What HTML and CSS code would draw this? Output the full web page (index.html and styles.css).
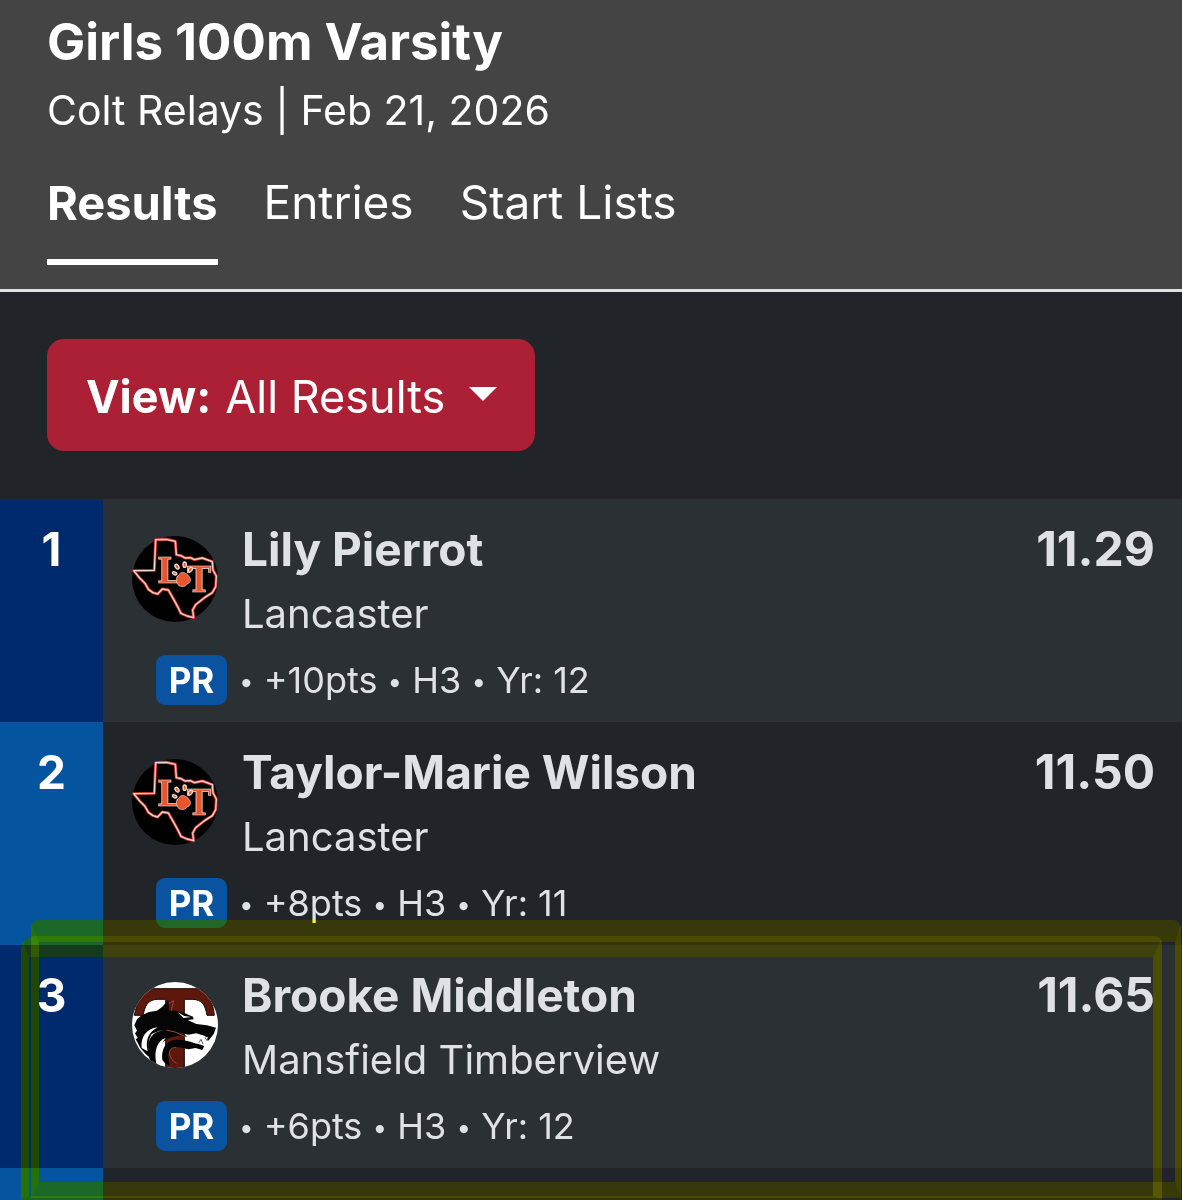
FILE: index.html
```html
<!DOCTYPE html>
<html lang="en">
<head>
<meta charset="utf-8">
<meta name="viewport" content="width=device-width, initial-scale=1">
<title>Girls 100m Varsity</title>
<link rel="stylesheet" href="styles.css">
</head>
<body>
<svg class="defs" aria-hidden="true">
  <defs>
    <g id="texas">
      <circle cx="150" cy="147" r="129" fill="#000"/>
      <path d="M92 29L124 28L151 34L154 74L168 77L180 84L196 83L208 89L232 84L262 95L264 120L274 138L272 170L262 188L240 202L212 224L203 240L206 263L186 258L168 250L158 230L146 208L130 180L112 177L98 192L84 188L70 178L60 160L44 144L26 122L88 121Z" fill="none" stroke="#c9382b" stroke-width="9" stroke-linejoin="round"/>
      <path d="M92 29L124 28L151 34L154 74L168 77L180 84L196 83L208 89L232 84L262 95L264 120L274 138L272 170L262 188L240 202L212 224L203 240L206 263L186 258L168 250L158 230L146 208L130 180L112 177L98 192L84 188L70 178L60 160L44 144L26 122L88 121Z" fill="none" stroke="#f4d3cd" stroke-width="4" stroke-linejoin="round"/>
    </g>
    <g id="paw">
      <path d="M164 132C170 124 184 128 191 138C200 148 197 158 186 162C180 173 160 172 157 160C150 148 157 138 164 132Z" fill="#e9552c" stroke="#f6ddd3" stroke-width="2"/>
      <g fill="#e9552c" stroke="#f6ddd3" stroke-width="4">
        <ellipse cx="149" cy="130" rx="7" ry="4" transform="rotate(25 149 130)"/>
        <ellipse cx="156" cy="110" rx="5" ry="8" transform="rotate(-35 156 110)"/>
        <ellipse cx="179" cy="104" rx="5" ry="8"/>
        <ellipse cx="196" cy="119" rx="5" ry="8" transform="rotate(35 196 119)"/>
      </g>
    </g>
  </defs>
  <symbol id="timberview" viewBox="21 18 258 258">
    <clipPath id="disc"><circle cx="150" cy="147" r="129"/></clipPath>
    <g clip-path="url(#disc)">
      <rect x="21" y="18" width="258" height="258" fill="#fff"/>
      <path d="M66 38H234C252 58 264 78 268 118H246C240 84 230 72 204 70H178V276H122V70H96C66 72 60 92 54 118H28C36 76 50 52 66 38Z" fill="#5e170b" stroke="#1c0a08" stroke-width="3"/>
      <path d="M28 148L36 130L50 118L72 108L96 104L112 92L130 72L132 102L158 106L180 112L204 122L206 130L188 132L214 144L246 148L273 155L266 174L250 194L240 180L214 172L190 176L168 170L140 166L104 164L80 174L72 192L70 216L80 250L62 234L46 216L38 200L32 190L38 186L30 172L36 164Z" fill="#050505"/>
      <path d="M70 222C66 188 84 166 112 164C144 162 166 170 188 182C154 176 124 184 112 202C102 220 104 244 108 276H88C76 262 70 244 70 222Z" fill="#050505"/>
      <path d="M112 252C108 220 122 196 148 192C176 188 196 198 220 204L238 210L232 222L212 216L190 220L164 214C138 212 128 224 130 244L134 270L120 262Z" fill="#050505"/>
      <path d="M50 216C46 184 64 158 98 154C72 168 60 190 68 226Z" fill="#fff"/>
      <path d="M94 262C86 226 96 194 122 186C106 204 102 232 110 274Z" fill="#fff"/>
      <path d="M157 108L178 120L198 123L176 126Z" fill="#fff"/>
      <path d="M132 82L146 74L139 104M124 162L150 168L182 182M154 214C126 214 128 244 154 262" fill="none" stroke="#8d4d46" stroke-width="3"/>
      <path d="M188 182L204 176L234 178L242 204L224 200L196 192Z" fill="#fff"/>
      <path d="M240 184L246 194L250 182M222 200L228 190L234 204" fill="#fff" stroke="#111" stroke-width="2"/>
    </g>
  </symbol>
</svg>

<header class="event">
  <h1 class="event-title">Girls 100m Varsity</h1>
  <p class="event-meta">Colt Relays | Feb 21, 2026</p>
  <nav class="tabs" aria-label="Event">
    <a class="tab tab-active" href="#results" aria-current="page">Results</a>
    <a class="tab" href="#entries">Entries</a>
    <a class="tab" href="#start-lists">Start Lists</a>
  </nav>
</header>

<main class="results" id="results">
  <div class="toolbar">
    <button class="view-button" type="button" aria-haspopup="menu"><strong>View:</strong><span>All Results</span><span class="caret"></span></button>
  </div>
  <ol class="list">
    <li class="row">
      <span class="rank">1</span>
      <div class="entry">
        <div class="summary">
          <svg class="avatar" viewBox="21 18 258 258" aria-label="Lancaster logo"><use href="#texas"/><text class="logo-letter" x="97" y="160">L</text><text class="logo-letter" x="186" y="187">T</text><use href="#paw"/></svg>
          <div class="who"><span class="name">Lily Pierrot</span><span class="team">Lancaster</span></div>
          <span class="time">11.29</span>
        </div>
        <div class="details"><span class="badge">PR</span><span><span class="dot">•</span> +10pts <span class="dot">•</span> H3 <span class="dot">•</span> Yr: 12</span></div>
      </div>
    </li>
    <li class="row">
      <span class="rank">2</span>
      <div class="entry">
        <div class="summary">
          <svg class="avatar" viewBox="21 18 258 258" aria-label="Lancaster logo"><use href="#texas"/><text class="logo-letter" x="97" y="160">L</text><text class="logo-letter" x="186" y="187">T</text><use href="#paw"/></svg>
          <div class="who"><span class="name">Taylor-Marie Wilson</span><span class="team">Lancaster</span></div>
          <span class="time">11.50</span>
        </div>
        <div class="details"><span class="badge">PR</span><span><span class="dot">•</span> +8pts <span class="dot">•</span> H3 <span class="dot">•</span> Yr: 11</span></div>
      </div>
    </li>
    <li class="row row-marked">
      <span class="rank">3</span>
      <div class="entry">
        <div class="summary">
          <svg class="avatar" aria-label="Mansfield Timberview logo"><use href="#timberview"/></svg>
          <div class="who"><span class="name">Brooke Middleton</span><span class="team">Mansfield Timberview</span></div>
          <span class="time">11.65</span>
        </div>
        <div class="details"><span class="badge">PR</span><span><span class="dot">•</span> +6pts <span class="dot">•</span> H3 <span class="dot">•</span> Yr: 12</span></div>
      </div>
      <i class="marker marker-outer marker-tint"></i>
      <i class="marker marker-outer marker-glow"></i>
      <i class="marker marker-inner marker-tint"></i>
      <i class="marker marker-inner marker-glow"></i>
    </li>
    <li class="row row-next"><span class="rank"></span><div class="entry"></div></li>
  </ol>
</main>
</body>
</html>
```
FILE: styles.css
```css
* { box-sizing: border-box; }

body {
  margin: 0;
  min-height: 100vh;
  display: flex;
  flex-direction: column;
  overflow-x: hidden;
  background: #212529;
  color: #dee2e6;
  font-family: Inter, "Liberation Sans", sans-serif;
}

.defs { position: absolute; width: 0; height: 0; }

.logo-letter {
  font: 700 108px "DejaVu Serif Condensed", "DejaVu Serif", serif;
  fill: #e9552c;
  stroke: #f6ddd3;
  stroke-width: 2px;
}

.event {
  padding: 12px 47px 24px;
  background: #444;
  border-bottom: 3px solid #dee2e6;
  color: #fff;
}

.event-title {
  margin: 0;
  font-size: 51px;
  line-height: 60px;
  font-weight: 700;
}

.event-meta {
  margin: 12px 0 0;
  font-size: 41px;
  line-height: 52px;
}

.tabs {
  display: flex;
  gap: 46px;
  margin-top: 36px;
}

.tab {
  padding-bottom: 26px;
  border-bottom: 6px solid transparent;
  color: inherit;
  font-size: 46px;
  line-height: 61px;
  text-decoration: none;
}

.tab-active {
  border-color: #fff;
  font-size: 47px;
  font-weight: 700;
}

.results {
  flex: 1;
  display: flex;
  flex-direction: column;
}

.toolbar { padding: 47px 47px 48px; }

.view-button {
  display: flex;
  align-items: center;
  gap: 14px;
  height: 112px;
  padding: 2px 38px 0 39px;
  border: 0;
  border-radius: 17px;
  background: #ac2035;
  color: #fff;
  font: 400 45px Inter, "Liberation Sans", sans-serif;
}

.caret {
  margin-left: 10px;
  margin-bottom: 4px;
  border: 14px solid transparent;
  border-top-color: #fff;
  border-bottom: 0;
}

.list {
  flex: 1;
  display: flex;
  flex-direction: column;
  margin: 0;
  padding: 0;
  list-style: none;
}

.row { display: flex; }
.row:nth-child(odd) { background: #2b3035; }
.row-marked { position: relative; }
.row-next { flex: 1; min-height: 32px; }

.rank {
  width: 103px;
  padding-top: 22px;
  background: #0554a0;
  color: #fff;
  font-size: 46px;
  line-height: 56px;
  font-weight: 700;
  text-align: center;
}

.row:nth-child(odd) .rank { background: #002a6e; }

.entry {
  flex: 1;
  padding: 0 27px 17px 29px;
}

.row-next .entry { padding: 0; }

.summary {
  display: flex;
  align-items: flex-start;
  gap: 24px;
  padding-top: 22px;
}

.avatar {
  width: 86px;
  height: 86px;
  margin-top: 15px;
}

.who {
  flex: 1;
  display: flex;
  flex-direction: column;
}

.name,
.time {
  font-size: 46px;
  line-height: 56px;
  font-weight: 700;
}

.time { font-size: 48px; }

.team {
  margin-top: 11px;
  font-size: 40px;
  line-height: 52px;
}

.details {
  display: flex;
  align-items: center;
  gap: 12px;
  margin-top: 15px;
  padding-left: 24px;
  font-size: 36px;
  line-height: 50px;
}

.dot {
  font-size: 26px;
  line-height: 1;
  vertical-align: 2px;
}

.badge {
  width: 71px;
  border-radius: 9px;
  background: #0a53a0;
  color: #fff;
  font-size: 35px;
  font-weight: 700;
  text-align: center;
}

/* Highlighter strokes drawn round the marked result */
.marker {
  position: absolute;
  border: solid;
  pointer-events: none;
}

.marker-outer {
  inset: -25px 1px -30px 31px;
  border-width: 22px 6px 16px 8px;
  border-radius: 8px 8px 0 0;
}

.marker-inner {
  inset: -9px 20px -32px 21px;
  border-width: 21px 9px 4px 8px;
  border-radius: 14px 8px 0 0;
}

.marker-tint {
  border-color: #ffff40 #ffff00;
  mix-blend-mode: multiply;
}

.marker-glow {
  border-color: #171400 #201e00;
  mix-blend-mode: plus-lighter;
}

.marker-inner.marker-glow { border-color: #141200 #201e00; }
```
